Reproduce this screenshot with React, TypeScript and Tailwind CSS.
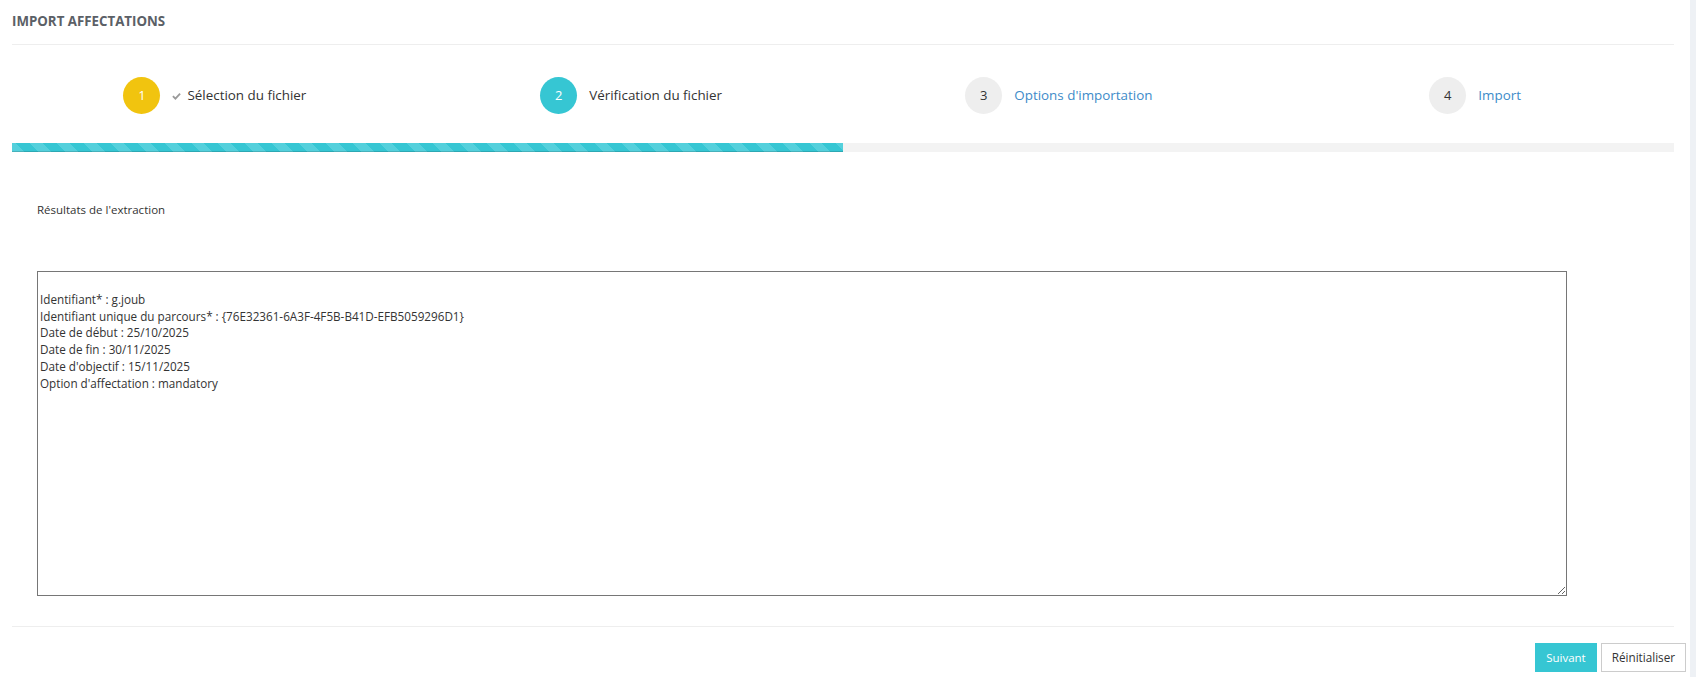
const EXTRACT = `
Identifiant* : g.joub
Identifiant unique du parcours* : {76E32361-6A3F-4F5B-B41D-EFB5059296D1}
Date de début : 25/10/2025
Date de fin : 30/11/2025
Date d'objectif : 15/11/2025
Option d'affectation : mandatory`;

type Step = {
  num: number;
  label: string;
  circle: string;
  text: string;
  nudge: string;
  done?: boolean;
};

const STEPS: Step[] = [
  { num: 1, label: "Sélection du fichier", circle: "bg-[#f1c40f] text-white", text: "text-[#333]", nudge: "", done: true },
  { num: 2, label: "Vérification du fichier", circle: "bg-[#36c6d3] text-white", text: "text-[#333]", nudge: "pr-[7px]" },
  { num: 3, label: "Options d'importation", circle: "bg-[#eeeeee] text-[#333]", text: "text-[#3d8bc9]", nudge: "pl-[9px]" },
  { num: 4, label: "Import", circle: "bg-[#eeeeee] text-[#333]", text: "text-[#3d8bc9]", nudge: "pl-[2px]" },
];

function CheckIcon() {
  return (
    <svg width="9" height="8" viewBox="0 0 10 8" className="mr-[6px] mt-[1px]">
      <path d="M1 4.2 L3.8 7 L9 1.4" fill="none" stroke="#9a9a9a" strokeWidth="2" />
    </svg>
  );
}

function StepItem({ step }: { step: Step }) {
  return (
    <div className={`flex items-center justify-center ${step.nudge}`}>
      <div
        className={`flex h-[37px] w-[37px] items-center justify-center rounded-full text-[13px] ${step.circle}`}
      >
        {step.num}
      </div>
      <div className={`ml-3 flex items-center text-[13.4px] ${step.text}`}>
        {step.done && <CheckIcon />}
        {step.label}
      </div>
    </div>
  );
}

export default function App() {
  return (
    <div className="flex h-[677px] w-full bg-white font-['Open_Sans',sans-serif]">
      <div className="flex flex-1 flex-col">
        <div className="ml-[12px] mr-[16px] flex h-[45px] items-center border-b border-[#eeeeee]">
          <h2 className="text-[13.3px] font-bold uppercase text-[#5b6066]">Import affectations</h2>
        </div>

        <div className="ml-[5px] mr-[6px] grid grid-cols-4 pb-[29px] pt-[32px]">
          {STEPS.map((s) => (
            <StepItem key={s.num} step={s} />
          ))}
        </div>

        <div className="ml-[12px] mr-[16px] h-[9px] bg-[#f3f3f3]">
          <div className="h-full w-1/2 bg-[#36c6d3] bg-[repeating-linear-gradient(45deg,#54d0dc_0_9px,#36c6d3_9px_19px)] shadow-[inset_0_-1px_0_rgba(0,0,0,0.15)]" />
        </div>

        <div className="ml-[37px] mt-[50px] text-[11.5px] leading-[16px] text-[#333]">
          Résultats de l'extraction
        </div>

        <textarea
          readOnly
          defaultValue={EXTRACT}
          className="ml-[37px] mt-[53px] h-[325px] w-[1530px] border border-[#767676] p-[2px] text-[11.7px] leading-[16.8px] text-[#333] outline-none"
        />

        <div className="ml-[12px] mr-[16px] mt-[30px] border-t border-[#eeeeee]" />

        <div className="mr-[4px] mt-[16px] flex justify-end gap-[4px]">
          <button
            type="button"
            className="h-[29px] border border-[#36c6d3] bg-[#36c6d3] px-[10px] text-[11.5px] text-white"
          >
            Suivant
          </button>
          <button
            type="button"
            className="h-[29px] border border-[#cccccc] bg-white px-[10px] text-[11.7px] text-[#333]"
          >
            Réinitialiser
          </button>
        </div>
      </div>
      <div className="w-[6px] bg-[#eef1f5]" />
    </div>
  );
}
